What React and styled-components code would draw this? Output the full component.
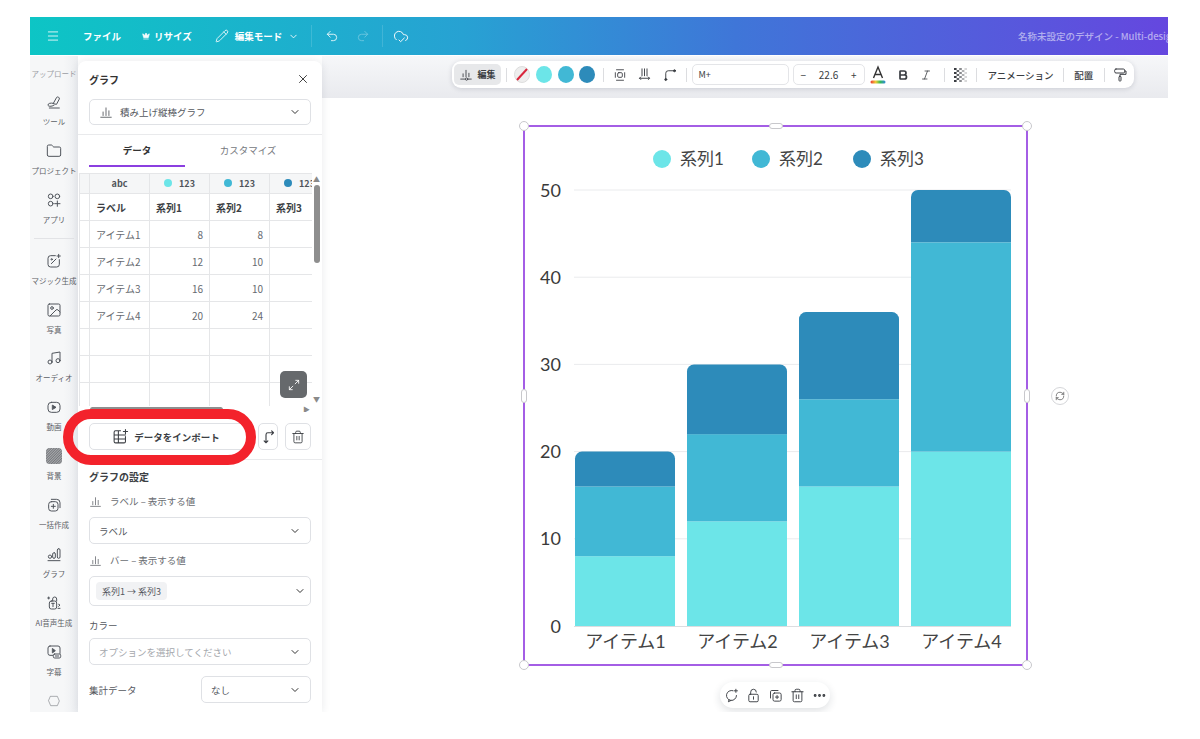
import React from "react";
import styled, { createGlobalStyle } from "styled-components";
import { Menu, Crown, Pencil, ChevronDown, Undo2, Redo2, CloudCheck, X, Folder, Music, Trash2, Ellipsis, RefreshCw, Image as ImageIcon, Bold, Italic } from "lucide-react";

const Global = createGlobalStyle`
  html, body { margin: 0; background: #fff; }
  body { font-family: "Noto Sans CJK JP", "Noto Sans", sans-serif; color: #333; }
  * { box-sizing: border-box; }
`;

const Page = styled.div`padding: 17px 0 0 30px; height: 739px; overflow: hidden;`;
const Frame = styled.div`width: 1138px; height: 695px; overflow: hidden; display: flex; flex-direction: column;`;

const Header = styled.header`
  height: 38px; flex: none; display: flex; align-items: center; color: #fff;
  background: linear-gradient(90deg, #0dc5c5 0%, #27a2d3 38%, #3f76d8 62%, #6547df 100%);
`;
const HeadIcon = styled.span`display: flex; align-items: center; margin-left: ${p => p.$ml}px; opacity: ${p => p.$dim ? 0.35 : 0.95};`;
const HeadText = styled.span`font-size: 9.5px; font-weight: 700; margin-left: ${p => p.$ml}px; white-space: nowrap;`;
const HeadDivider = styled.span`width: 1px; height: 22px; background: rgba(255,255,255,.14); margin-left: ${p => p.$ml}px;`;
const DocTitle = styled.span`margin-left: auto; width: 150px; overflow: hidden; white-space: nowrap; font-size: 9.5px; color: rgba(255,255,255,.55); font-weight: 500;`;

const Body = styled.div`flex: 1; min-height: 0; display: flex; margin-top: 1px;`;

const Rail = styled.nav`width: 48px; flex: none; background: linear-gradient(90deg, #f6f7f8 70%, #eceef1); display: flex; flex-direction: column; overflow: hidden;`;
const RailTop = styled.div`height: 34px; flex: none; display: flex; align-items: center; justify-content: center; font-size: 7.5px; color: #9a9da3; white-space: nowrap;`;
const RailItem = styled.div`height: 48.9px; flex: none; display: flex; flex-direction: column; align-items: center; padding-top: 3px; color: #50555c;`;
const RailIcon = styled.span`height: 18px; display: flex; align-items: center; justify-content: center;`;
const RailLabel = styled.span`margin-top: 5px; font-size: 7.5px; line-height: 11px; white-space: nowrap; color: #5c6066;`;
const RailDivider = styled.div`height: 1px; flex: none; margin: 1px 4px 10px; background: #e2e3e6;`;

const Panel = styled.aside`
  width: 244px; flex: none; margin-top: 5px; background: #fff; border-radius: 8px 8px 0 0; position: relative;
  box-shadow: 0 0 8px rgba(30,40,60,.1); display: flex; flex-direction: column;
`;
const PanelHead = styled.div`height: 38px; padding: 0 12px 2px 11px; display: flex; align-items: center; justify-content: space-between; font-size: 10px; font-weight: 700; color: #333;`;
const TypeWrap = styled.div`padding: 0 11px 9px; border-bottom: 1px solid #e9eaec;`;
const Select = styled.div`
  height: ${p => p.$h || 27}px; width: ${p => p.$w ? p.$w + "px" : "100%"}; border: 1px solid #dfe1e5; border-radius: 5px;
  display: flex; align-items: center; padding: 0 ${p => p.$pr || 9}px 0 ${p => p.$pl || 9}px; font-size: 9.5px; color: ${p => p.$muted ? "#a5a8ad" : "#55585e"};
  flex: none;
`;
const SelectText = styled.span`flex: 1; white-space: nowrap; display: flex; align-items: center; gap: 7px;`;
const Tabs = styled.div`display: flex; height: 32px; padding: 0 11px; margin-bottom: 6px; flex: none;`;
const Tab = styled.div`
  width: ${p => p.$w}px; display: flex; align-items: center; justify-content: center; font-size: 9.5px;
  font-weight: ${p => p.$on ? 700 : 400}; color: ${p => p.$on ? "#333" : "#75787d"};
  border-bottom: 2px solid ${p => p.$on ? "#8b3fe0" : "transparent"};
`;
const TableWrap = styled.div`position: relative; height: 239px; flex: none; overflow: hidden;`;
const Table = styled.table`
  border-collapse: collapse; table-layout: fixed; width: 250px; margin-left: 1px; font-size: 10px; color: #55585e;
  td, th { border: 1.5px solid #e5e6e8; padding: 0 6px; overflow: hidden; white-space: nowrap; }
`;
const TH = styled.th`height: 20px; background: #f5f6f7; font-size: 9px; font-weight: 700; color: #50545a; text-align: center;`;
const Dot = styled.span`display: inline-block; width: 8px; height: 8px; border-radius: 50%; background: ${p => p.$c}; margin-right: 7px;`;
const TD = styled.td`height: 27px; text-align: ${p => p.$right ? "right" : "left"}; font-weight: ${p => p.$b ? 700 : 400}; color: ${p => p.$b ? "#3c3f44" : "#666a70"};`;
const TableMask = styled.div`position: absolute; top: 0; right: 0; bottom: 0; width: 10px; background: #fff;`;
const ScrollThumbV = styled.div`position: absolute; right: 2px; top: 12px; width: 6px; height: 78px; background: #8e8e8e; border-radius: 3px;`;
const ScrollArrow = styled.span`position: absolute; right: ${p => p.$r}px; top: ${p => p.$t}px; color: #8a8a8a; font-size: 7px; line-height: 8px;`;
const ScrollTrackH = styled.div`position: absolute; left: 0; right: 0; bottom: 0; height: 6px; background: #fff;`;
const ScrollThumbH = styled.div`position: absolute; left: 12px; bottom: 0; width: 133px; height: 5px; background: #8e8e8e; border-radius: 3px;`;
const ExpandBtn = styled.div`position: absolute; left: 202px; top: 198px; width: 27px; height: 27px; border-radius: 5px; background: #66696c; color: #fff; display: flex; align-items: center; justify-content: center;`;

const ImportRow = styled.div`position: relative; display: flex; height: 48px; padding: 11px 11px 0; gap: 7px; border-bottom: 1px solid #e9eaec; flex: none;`;
const ImportBtn = styled.div`width: 158px; height: 27px; border: 1px solid #dfe1e5; border-radius: 5px; padding-right: 4px; display: flex; align-items: center; justify-content: center; gap: 5px; font-size: 9.5px; font-weight: 700; color: #3c3f44;`;
const SquareBtn = styled.div`width: ${p => p.$w}px; height: 27px; margin-left: ${p => p.$ml || 0}px; border: 1px solid #dfe1e5; border-radius: 5px; display: flex; align-items: center; justify-content: center; color: #3c3f44;`;
const RedOval = styled.div`position: absolute; left: -15px; top: -3px; width: 193px; height: 56px; border: 10px solid #f3222b; border-radius: 28px; pointer-events: none;`;

const Settings = styled.div`padding: 9px 11px 0; display: flex; flex-direction: column;`;
const SetTitle = styled.div`font-size: 10px; font-weight: 700; color: #3c3f44; line-height: 16px; height: 16px;`;
const FieldLabel = styled.div`height: ${p => p.$h}px; display: flex; align-items: center; gap: 8px; font-size: 9.5px; color: #6a6d72;`;
const Chip = styled.span`background: #f1f2f4; border-radius: 4px; padding: 0 6px; height: 18px; display: inline-flex; align-items: center; font-size: 9px; color: #55585e;`;
const ColorLabel = styled.div`font-size: 9.5px; color: #55585e; height: 32px; padding-top: 5px; display: flex; align-items: center;`;
const AggRow = styled.div`display: flex; align-items: center; justify-content: space-between; margin-top: 11px; font-size: 9.5px; color: #55585e;`;

const Main = styled.main`flex: 1; min-width: 0; display: flex; flex-direction: column; background: #fff;`;
const ToolStrip = styled.div`height: 42px; flex: none; padding: 5px 0 0 130px; background: linear-gradient(#f6f7f9, #e9eaee);`;
const ToolPill = styled.div`width: 682px; height: 27px; background: #fff; border-radius: 9px; box-shadow: 0 1px 5px rgba(30,40,60,.16); display: flex; align-items: center; padding-left: 2px; color: #3a3d42;`;
const EditBtn = styled.div`width: 47px; height: 21px; border-radius: 5px; background: #e7e8ea; display: flex; align-items: center; justify-content: center; gap: 4px; font-size: 9px; font-weight: 700; flex: none;`;
const TDiv = styled.span`width: 1px; height: 14px; background: #dcdde0; flex: none; margin-left: ${p => p.$ml}px;`;
const Swatch = styled.span`width: 16px; height: 17px; border-radius: 50%; background: ${p => p.$c}; flex: none; margin-left: ${p => p.$ml}px;`;
const TIcon = styled.span`display: flex; align-items: center; justify-content: center; flex: none; margin-left: ${p => p.$ml}px;`;
const FontBox = styled.div`width: 97px; height: 21px; border: 1px solid #e4e5e8; border-radius: 5px; margin-left: ${p => p.$ml}px; flex: none; display: flex; align-items: center; padding-left: 6px; font-size: 9px;`;
const SizeBox = styled.div`width: 72px; height: 21px; border: 1px solid #e4e5e8; border-radius: 5px; margin-left: 4px; flex: none; display: flex; align-items: center; justify-content: space-between; padding: 0 7px; font-size: 10px;`;
const TText = styled.span`font-size: 9.5px; font-weight: 500; white-space: nowrap; flex: none; margin-left: ${p => p.$ml}px;`;

const Canvas = styled.div`flex: 1; position: relative; padding: 27px 0 0 201px;`;
const Selection = styled.div`position: relative; width: 505px; height: 541px; border: 2px solid #a45ee5;`;
const ChartSvg = styled.svg`position: absolute; left: -2px; top: -2px; display: block; font-family: Lato, "Noto Sans CJK JP", sans-serif;`;
const Corner = styled.span`position: absolute; width: 10px; height: 10px; border-radius: 50%; border: 1px solid #c8c8cc; background: #fff; left: ${p => p.$x}; top: ${p => p.$y}; transform: translate(-50%, -50%);`;
const EdgeH = styled.span`position: absolute; width: 14px; height: 6px; border-radius: 3px; border: 1px solid #c8c8cc; background: #fff; left: 50%; top: ${p => p.$y}; transform: translate(-50%, -50%);`;
const EdgeV = styled.span`position: absolute; width: 6px; height: 14px; border-radius: 3px; border: 1px solid #c8c8cc; background: #fff; top: 50%; left: ${p => p.$x}; transform: translate(-50%, -50%);`;
const Rotate = styled.span`position: absolute; left: 526px; top: 50%; transform: translate(0, -50%); width: 18px; height: 18px; border-radius: 50%; border: 1px solid #d5d6d9; display: flex; align-items: center; justify-content: center; color: #444; background: #fff;`;
const FloatBar = styled.div`position: absolute; left: 195px; top: 555px; width: 110px; height: 26px; border-radius: 13px; background: #fff; box-shadow: 0 3px 8px rgba(30,40,60,.14); display: flex; align-items: center; justify-content: center; gap: 7px; color: #3a3d42;`;

const Ic = ({ s = 16, w = 1.5, children }) => (
  <svg width={s} height={s} viewBox="0 0 24 24" fill="none" stroke="currentColor" strokeWidth={w} strokeLinecap="round" strokeLinejoin="round">{children}</svg>
);
const ChartTypeIcon = ({ s = 14 }) => <Ic s={s}><path d="M3 21h18M7 18v-6M12 18V5M17 18v-8" /></Ic>;
const Tool = () => <Ic><path d="M11 14l5-9a2.500 2.500 0 0 1 4 2.500l-4 7.500z" /><path d="M11 14c-4-1-8 0-8 2.500S8 19 12 17M5 21h15" /></Ic>;
const Apps = () => <Ic><circle cx="7" cy="6.500" r="3.500" /><circle cx="17" cy="6.500" r="3.500" /><circle cx="7" cy="17.500" r="3.500" /><path d="M17 13.500v8M13 17.500h8" /></Ic>;
const Magic = () => <Ic><path d="M14 4H7a4 4 0 0 0-4 4v9a4 4 0 0 0 4 4h9a4 4 0 0 0 4-4v-7" /><path d="M8 16l7-7" /><circle cx="8.500" cy="9.500" r="1" /><path d="M19 2v5M16.500 4.500h5" /></Ic>;
const Video = () => <Ic><rect x="3" y="5" width="18" height="15" rx="5" /><path d="M10 9.500l5 3-5 3z" fill="currentColor" /></Ic>;
const Bg = () => (
  <svg width="16" height="16" viewBox="0 0 16 16"><defs><pattern id="hatch" width="1.800" height="1.800" patternUnits="userSpaceOnUse" patternTransform="rotate(45)"><rect width="1.800" height="1.800" fill="#a9abae" /><rect width=".8" height="1.800" fill="#6f7175" /></pattern></defs><rect width="16" height="16" rx="3.500" fill="url(#hatch)" /></svg>
);
const Bulk = () => <Ic><rect x="4" y="7" width="14" height="14" rx="4" /><path d="M8 3.500h8a5 5 0 0 1 5 5V16M11 11v6M8 14h6" /></Ic>;
const Graph = () => <Ic><path d="M3 22h18" /><circle cx="6" cy="16" r="2.500" /><rect x="10" y="10" width="4" height="8.500" rx="2" /><rect x="17" y="4" width="4" height="14.500" rx="2" /></Ic>;
const Voice = () => <Ic><rect x="5" y="9" width="11" height="12" rx="3" /><path d="M10.500 12.500v5M8.500 12.500h4M4 3v3M2.500 4.500h3M10 9V6a3 3 0 0 1 6 0v3M19 14l2 1-2 2M18 20h3" /></Ic>;
const Caption = () => <Ic><rect x="3" y="3" width="18" height="14" rx="3" /><path d="M10 7l4 3-4 3z" fill="currentColor" /><rect x="11" y="15" width="11" height="6" rx="2" fill="#f4f5f7" /><path d="M14 18h5" /></Ic>;
const More = () => <Ic><path d="M7 5h10l3 7-3 7H7l-3-7z" opacity=".45" /></Ic>;

const railItems = [
  ["ツール", <Tool />], ["プロジェクト", <Folder size={16} strokeWidth={1.5} />], ["アプリ", <Apps />], "div",
  ["マジック生成", <Magic />], ["写真", <ImageIcon size={16} strokeWidth={1.5} />], ["オーディオ", <Music size={16} strokeWidth={1.5} />],
  ["動画", <Video />], ["背景", <Bg />], ["一括作成", <Bulk />], ["グラフ", <Graph />], ["AI音声生成", <Voice />], ["字幕", <Caption />], ["", <More />],
];

const checker = [];
for (let r = 0; r < 7; r++) for (let c = 0; c < 5; c++) if ((r + c) % 2 === 0) checker.push([c, r]);

const C1 = "#6ce5e8", C2 = "#41b8d5", C3 = "#2d8bba";
const rows = [["アイテム1", 8, 8, 4], ["アイテム2", 12, 10, 8], ["アイテム3", 16, 10, 10], ["アイテム4", 20, 24, 6], ["", "", "", ""], ["", "", "", ""], ["", "", "", ""]];
const Y = v => 626 - v * 8.72;
const Stack = ({ x, a, b, c }) => {
  const w = 100, top = Y(a + b + c);
  return (
    <g>
      <rect x={x} y={Y(a)} width={w} height={626 - Y(a)} fill={C1} />
      <rect x={x} y={Y(a + b)} width={w} height={Y(a) - Y(a + b)} fill={C2} />
      <path d={`M${x} ${Y(a + b)}V${top + 7}a7 7 0 0 1 7-7H${x + w - 7}a7 7 0 0 1 7 7V${Y(a + b)}z`} fill={C3} />
    </g>
  );
};
const Chart = () => (
  <ChartSvg width="505" height="541" viewBox="523 125 505 541">
    {[10, 20, 30, 40, 50].map(v => <line key={v} x1="574" x2="1011" y1={Y(v)} y2={Y(v)} stroke="#eaebed" />)}
    <line x1="574" x2="1011" y1="626.500" y2="626.500" stroke="#dcdde0" />
    {[0, 10, 20, 30, 40, 50].map(v => <text key={v} x="561" y={Y(v) + 6.500} textAnchor="end" fontSize="18" fill="#3a3a3a">{v}</text>)}
    <Stack x={575} a={8} b={8} c={4} />
    <Stack x={687} a={12} b={10} c={8} />
    <Stack x={799} a={16} b={10} c={10} />
    <Stack x={911} a={20} b={24} c={6} />
    {["アイテム1", "アイテム2", "アイテム3", "アイテム4"].map((t, i) => <text key={t} x={625.500 + i * 112} y="648" textAnchor="middle" fontSize="18" fill="#444">{t}</text>)}
    {[[662, C1, "系列1"], [761, C2, "系列2"], [862, C3, "系列3"]].map(([x, c, t]) => (
      <g key={t}><circle cx={x} cy="159" r="9" fill={c} /><text x={x + 18} y="165" fontSize="17" fill="#444">{t}</text></g>
    ))}
  </ChartSvg>
);

export default function App() {
  return (
    <Page>
      <Global />
      <Frame>
        <Header>
          <HeadIcon $ml={16}><Menu size={14} strokeWidth={1.5} /></HeadIcon>
          <HeadText $ml={23}>ファイル</HeadText>
          <HeadIcon $ml={21}><Crown size={8} fill="#fff" /></HeadIcon>
          <HeadText $ml={4}>リサイズ</HeadText>
          <HeadIcon $ml={23}><Pencil size={14} strokeWidth={1.5} /></HeadIcon>
          <HeadText $ml={6}>編集モード</HeadText>
          <HeadIcon $ml={6}><ChevronDown size={11} /></HeadIcon>
          <HeadDivider $ml={12} />
          <HeadIcon $ml={13}><Undo2 size={14} strokeWidth={1.5} /></HeadIcon>
          <HeadIcon $ml={17} $dim><Redo2 size={14} strokeWidth={1.5} /></HeadIcon>
          <HeadDivider $ml={12} />
          <HeadIcon $ml={10}><CloudCheck size={16} strokeWidth={1.5} /></HeadIcon>
          <DocTitle>名称未設定のデザイン - Multi-design</DocTitle>
        </Header>
        <Body>
          <Rail>
            <RailTop>アップロード</RailTop>
            {railItems.map((it, i) => it === "div" ? <RailDivider key={i} /> : (
              <RailItem key={i}><RailIcon>{it[1]}</RailIcon><RailLabel>{it[0]}</RailLabel></RailItem>
            ))}
          </Rail>
          <Panel>
            <PanelHead>グラフ<X size={14} strokeWidth={1.6} color="#333" /></PanelHead>
            <TypeWrap>
              <Select $h={26}><SelectText><ChartTypeIcon />積み上げ縦棒グラフ</SelectText><ChevronDown size={12} color="#333" /></Select>
            </TypeWrap>
            <Tabs><Tab $on $w={96}>データ</Tab><Tab $w={126}>カスタマイズ</Tab></Tabs>
            <TableWrap>
              <Table>
                <colgroup><col style={{ width: 10 }} /><col style={{ width: 60 }} /><col style={{ width: 60 }} /><col style={{ width: 60 }} /><col style={{ width: 60 }} /></colgroup>
                <tbody>
                  <tr><TH /><TH>abc</TH><TH><Dot $c={C1} />123</TH><TH><Dot $c={C2} />123</TH><TH><Dot $c={C3} />123</TH></tr>
                  <tr><TD /><TD $b>ラベル</TD><TD $b>系列1</TD><TD $b>系列2</TD><TD $b>系列3</TD></tr>
                  {rows.map((r, i) => (
                    <tr key={i}><TD /><TD>{r[0]}</TD><TD $right>{r[1]}</TD><TD $right>{r[2]}</TD><TD $right>{r[3]}</TD></tr>
                  ))}
                </tbody>
              </Table>
              <TableMask />
              <ScrollArrow $r={2} $t={2}>▲</ScrollArrow>
              <ScrollThumbV />
              <ScrollArrow $r={2} $t={222}>▼</ScrollArrow>
              <ExpandBtn><Ic s={14}><path d="M14 10l6-6M15 4h5v5M10 14l-6 6M4 15v5h5" /></Ic></ExpandBtn>
              <ScrollTrackH><ScrollThumbH /></ScrollTrackH>
              <ScrollArrow $r={12} $t={232}>▶</ScrollArrow>
            </TableWrap>
            <ImportRow>
              <ImportBtn>
                <Ic s={17}><path d="M12 4H5a2 2 0 0 0-2 2v13a2 2 0 0 0 2 2h12a2 2 0 0 0 2-2v-7M3 10h16M3 15.500h16M9 4v17M19 2v6M16 5h6" /></Ic>
                データをインポート
              </ImportBtn>
              <SquareBtn $w={20} $ml={4}><Ic s={15} w={1.8}><path d="M8 22V9a3 3 0 0 1 3-3h9M5 19l3 3 3-3M17 3l3 3-3 3" /></Ic></SquareBtn>
              <SquareBtn $w={26} $ml={0}><Trash2 size={14} strokeWidth={1.5} /></SquareBtn>
              <RedOval />
            </ImportRow>
            <Settings>
              <SetTitle>グラフの設定</SetTitle>
              <FieldLabel $h={32}><ChartTypeIcon s={13} />ラベル – 表示する値</FieldLabel>
              <Select $h={27}><SelectText>ラベル</SelectText><ChevronDown size={12} color="#333" /></Select>
              <FieldLabel $h={32}><ChartTypeIcon s={13} />バー – 表示する値</FieldLabel>
              <Select $h={30} $pl={6} $pr={4}><SelectText><Chip>系列1 → 系列3</Chip></SelectText><ChevronDown size={12} color="#333" /></Select>
              <ColorLabel>カラー</ColorLabel>
              <Select $h={27} $muted><SelectText>オプションを選択してください</SelectText><ChevronDown size={12} color="#333" /></Select>
              <AggRow>集計データ<Select $h={27} $w={110}><SelectText>なし</SelectText><ChevronDown size={12} color="#333" /></Select></AggRow>
            </Settings>
          </Panel>
          <Main>
            <ToolStrip>
              <ToolPill>
                <EditBtn><Ic s={14}><path d="M7 15V10M12 15V4M17 15v-6M3 19h7M16 19h5" /><circle cx="13" cy="19" r="2" /></Ic>編集</EditBtn>
                <TDiv $ml={5} />
                <TIcon $ml={7}>
                  <svg width="16" height="17" viewBox="0 0 16 17"><ellipse cx="8" cy="8.500" rx="7.500" ry="8" fill="#eee" stroke="#ddd" /><line x1="3" y1="14" x2="13" y2="3" stroke="#d9263c" strokeWidth="2" /></svg>
                </TIcon>
                <Swatch $c={C1} $ml={6} /><Swatch $c={C2} $ml={6} /><Swatch $c={C3} $ml={5} />
                <TDiv $ml={8} />
                <TIcon $ml={9}><Ic s={14}><path d="M6 3h12M6 21h12M4 8v8M20 8v8" /><rect x="8" y="8" width="8" height="8" rx="2" /></Ic></TIcon>
                <TIcon $ml={10}><Ic s={15}><path d="M8 3v11M12 3v11M16 3v11M4 18h16M6 16l-2 2 2 2M18 16l2 2-2 2" /></Ic></TIcon>
                <TIcon $ml={10}><Ic s={15}><path d="M6 20V10a4 4 0 0 1 4-4h9" /><circle cx="6" cy="20" r="1.600" fill="currentColor" /><circle cx="20" cy="6" r="1.600" fill="currentColor" /></Ic></TIcon>
                <TDiv $ml={8.500} />
                <FontBox $ml={5}>M+</FontBox>
                <SizeBox><span>−</span><span>22.6</span><span>+</span></SizeBox>
                <TIcon $ml={5}>
                  <svg width="16" height="20" viewBox="0 0 16 20"><defs><linearGradient id="rb" x1="0" x2="1"><stop offset="0" stopColor="#e33" /><stop offset=".35" stopColor="#ec3" /><stop offset=".65" stopColor="#3b5" /><stop offset="1" stopColor="#38d" /></linearGradient></defs><path d="M3.500 13L8 2l4.500 11M5 9.500h6" fill="none" stroke="#333" strokeWidth="1.400" /><rect x="0.500" y="15.500" width="15" height="3" rx="1.500" fill="url(#rb)" /></svg>
                </TIcon>
                <TIcon $ml={11}><Bold size={12} strokeWidth={3.400} /></TIcon>
                <TIcon $ml={11}><Italic size={12} strokeWidth={1.6} /></TIcon>
                <TDiv $ml={12} />
                <TIcon $ml={9}>
                  <svg width="13" height="14" viewBox="0 0 13 14">{checker.map(([c, r]) => <rect key={`${c}-${r}`} x={c * 2.600} y={r * 2} width="2.600" height="2" fill="#3a3d42" opacity={1 - c * 0.2} />)}</svg>
                </TIcon>
                <TDiv $ml={9} />
                <TText $ml={11}>アニメーション</TText>
                <TDiv $ml={9.500} />
                <TText $ml={10}>配置</TText>
                <TDiv $ml={11} />
                <TIcon $ml={7}><Ic s={16}><rect x="4" y="3" width="15" height="6" rx="2" /><path d="M19 6h2v5h-9v3" /><rect x="10.500" y="14" width="3" height="7" rx="1" /></Ic></TIcon>
              </ToolPill>
            </ToolStrip>
            <Canvas>
              <Selection>
                <Chart />
                <Corner $x="-1px" $y="-1px" /><Corner $x="calc(100% + 1px)" $y="-1px" /><Corner $x="-1px" $y="calc(100% + 1px)" /><Corner $x="calc(100% + 1px)" $y="calc(100% + 1px)" />
                <EdgeH $y="-1px" /><EdgeH $y="calc(100% + 1px)" /><EdgeV $x="-1px" /><EdgeV $x="calc(100% + 1px)" />
                <Rotate><RefreshCw size={10} strokeWidth={1.6} /></Rotate>
                <FloatBar>
                  <Ic s={15}><path d="M14.500 4.300A8 8 0 1 0 20 12M19 2v5M16.500 4.500h5M8 19l-1 3 4-2" /></Ic>
                  <Ic s={15}><rect x="4.500" y="10" width="15" height="12" rx="2" /><path d="M7.500 10V6.500a4.500 4.500 0 0 1 9 0M12 14v4" /></Ic>
                  <Ic s={15}><path d="M4 16V6a2 2 0 0 1 2-2h10" /><rect x="8" y="8" width="13" height="13" rx="2.500" /><path d="M14.500 12v5M12 14.500h5" /></Ic>
                  <Trash2 size={15} strokeWidth={1.5} />
                  <Ellipsis size={15} strokeWidth={2.600} />
                </FloatBar>
              </Selection>
            </Canvas>
          </Main>
        </Body>
      </Frame>
    </Page>
  );
}
